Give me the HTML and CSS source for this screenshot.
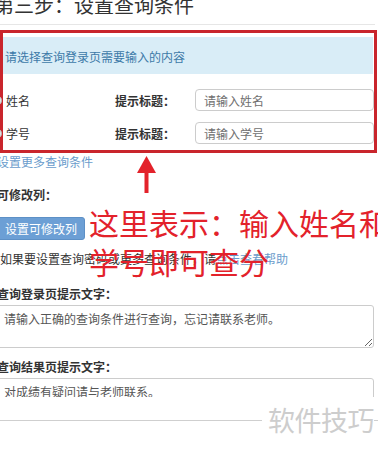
FILE: index.html
```html
<!DOCTYPE html>
<html>
<head>
    <meta charset="utf-8">
    <title>设置查询条件</title>
    <link rel="stylesheet" href="styles.css">
</head>
<body>

<div class="page">
    <h3 class="title">第三步：设置查询条件</h3>
    <hr class="title-line">

    <div class="mark-box">
        <div class="alert">请选择查询登录页需要输入的内容</div>
        <div class="field-row">
            <span class="field-name"><span class="radio"></span>姓名</span>
            <label>提示标题：</label>
            <input type="text" placeholder="请输入姓名">
        </div>
        <div class="field-row">
            <span class="field-name"><span class="radio"></span>学号</span>
            <label>提示标题：</label>
            <input type="text" placeholder="请输入学号">
        </div>
    </div>

    <a class="more-link">设置更多查询条件</a>

    <div class="label">可修改列：</div>
    <button class="btn-primary">设置可修改列</button>
    <p class="help">如果要设置查询密码或更多查询条件，请<a>点击查看帮助</a></p>

    <div class="label label-gap">查询登录页提示文字：</div>
    <textarea class="text-box">请输入正确的查询条件进行查询，忘记请联系老师。</textarea>

    <div class="label label-tight">查询结果页提示文字：</div>
    <div class="clip">
        <input class="text-box" type="text" value="对成绩有疑问请与老师联系。">
    </div>

    <div class="footer">
        <hr class="footer-line">
        <span class="watermark">软件技巧</span>
    </div>
</div>

<svg class="arrow" width="20" height="38" viewBox="0 0 20 38">
    <polygon points="9.5,0 0,17 19,17" fill="#e3222b"/>
    <rect x="7.5" y="16" width="4" height="21" fill="#e3222b"/>
</svg>
<div class="note">这里表示：输入姓名和<br>学号即可查分</div>

</body>
</html>
```

FILE: styles.css
```css
body {
    margin: 0;
    width: 378px;
    height: 452px;
    overflow: hidden;
    position: relative;
    background: #fff;
    color: #333;
    font-family: "Noto Sans CJK SC", "Noto Sans", sans-serif;
    font-size: 12px;
    line-height: 17px;
    text-spacing-trim: space-all;
}
.page {
    margin-left: -3px;
}
.title {
    margin: -5px 0 0 -3px;
    font-size: 20px;
    line-height: 20px;
    font-weight: normal;
    color: #333;
    white-space: nowrap;
}
.title-line {
    margin: 9px 3px 0 3px;
    border: none;
    border-top: 1px solid #e6e6e6;
}
.mark-box {
    margin: 5px 1px 0 3px;
    border: 3px solid #c9252c;
    padding: 4px 0 6px 0;
}
.alert {
    margin-right: 1px;
    padding: 11px 5px 9px 2px;
    background: #d9edf7;
    color: #3d7aa8;
}
.field-row {
    display: grid;
    grid-template-columns: 112px 80px 1fr;
    align-items: center;
    height: 22px;
    margin-top: 11px;
}
.alert + .field-row {
    margin-top: 15px;
}
.field-name {
    display: flex;
    align-items: center;
}
.radio {
    width: 9px;
    height: 9px;
    margin: 0 4px 0 -12px;
    border: 1px solid #bbb;
    border-radius: 50%;
    background: #e6e6e6;
}
.field-row label {
    font-weight: bold;
}
.field-row input {
    height: 22px;
    box-sizing: border-box;
    padding: 0 8px;
    border: 1px solid #ccc;
    border-radius: 4px;
    font: inherit;
    color: #555;
}
input::placeholder {
    color: #6f6f6f;
}
.more-link {
    display: block;
    color: #6a9ccc;
}
.label {
    margin-top: 16px;
    font-weight: bold;
}
.btn-primary {
    display: block;
    height: 23px;
    margin-top: 14px;
    padding: 0 7px 0 7px;
    border: 1px solid #5d90c6;
    border-radius: 3px;
    background: #6c9fd5;
    color: #fff;
    font: inherit;
}
.help {
    margin: 10px 0 0 3px;
    white-space: nowrap;
}
.help a {
    color: #6a9ccc;
}
.label-gap {
    margin-top: 18px;
}
.label-tight {
    margin-top: 10px;
}
.text-box {
    display: block;
    box-sizing: border-box;
    width: 377px;
    margin-top: 3px;
    padding: 4px 6px;
    border: 1px solid #ccc;
    border-radius: 3px;
    font: inherit;
    color: #555;
}
textarea.text-box {
    height: 43px;
    resize: vertical;
}
.clip {
    height: 19px;
    margin-top: 3px;
    overflow: hidden;
}
.clip .text-box {
    height: 26px;
    margin-top: 0;
    padding: 3px 6px;
}
.footer {
    position: relative;
    margin-top: 23px;
}
.footer-line {
    margin: 0 0 0 3px;
    border: none;
    border-top: 1px solid #cfcfcf;
}
.watermark {
    position: absolute;
    right: 4px;
    top: -16px;
    padding-left: 6px;
    background: #fff;
    color: #cdcdcd;
    font-size: 27px;
    line-height: 32px;
    letter-spacing: -0.5px;
}
.arrow {
    position: absolute;
    left: 137px;
    top: 156px;
}
.note {
    position: absolute;
    left: 89px;
    top: 203px;
    color: #e3222b;
    font-size: 30px;
    line-height: 39px;
    white-space: nowrap;
}
```
